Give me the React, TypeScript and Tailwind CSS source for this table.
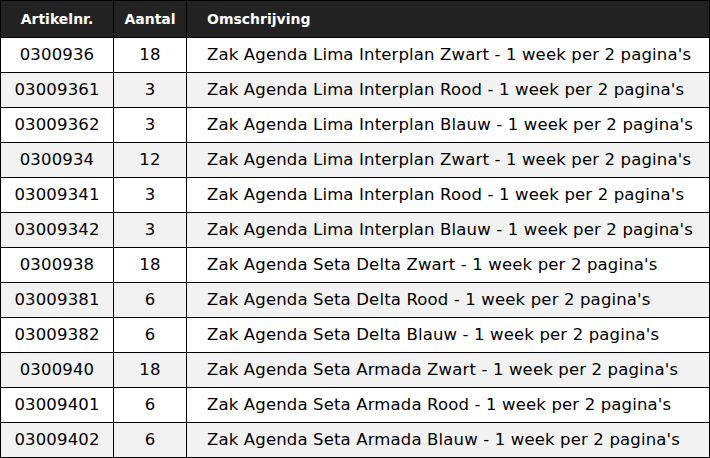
const rows: [string, string, string][] = [
  ['0300936', '18', "Zak Agenda Lima Interplan Zwart - 1 week per 2 pagina's"],
  ['03009361', '3', "Zak Agenda Lima Interplan Rood - 1 week per 2 pagina's"],
  ['03009362', '3', "Zak Agenda Lima Interplan Blauw - 1 week per 2 pagina's"],
  ['0300934', '12', "Zak Agenda Lima Interplan Zwart - 1 week per 2 pagina's"],
  ['03009341', '3', "Zak Agenda Lima Interplan Rood - 1 week per 2 pagina's"],
  ['03009342', '3', "Zak Agenda Lima Interplan Blauw - 1 week per 2 pagina's"],
  ['0300938', '18', "Zak Agenda Seta Delta Zwart - 1 week per 2 pagina's"],
  ['03009381', '6', "Zak Agenda Seta Delta Rood - 1 week per 2 pagina's"],
  ['03009382', '6', "Zak Agenda Seta Delta Blauw - 1 week per 2 pagina's"],
  ['0300940', '18', "Zak Agenda Seta Armada Zwart - 1 week per 2 pagina's"],
  ['03009401', '6', "Zak Agenda Seta Armada Rood - 1 week per 2 pagina's"],
  ['03009402', '6', "Zak Agenda Seta Armada Blauw - 1 week per 2 pagina's"],
];

export default function App() {
  return (
    <div className="w-[710px] bg-white font-['DejaVu_Sans',sans-serif] text-black">
      <table className="w-full border-collapse border border-black">
        <thead>
          <tr className="h-[37px] bg-[#222222] text-[14px] font-bold text-white">
            <th className="w-[113px] border border-black text-center">Artikelnr.</th>
            <th className="w-[73px] border border-black text-center">Aantal</th>
            <th className="border border-black pl-5 text-left">Omschrijving</th>
          </tr>
        </thead>
        <tbody className="text-[16.5px] tracking-[0.15px]">
          {rows.map(([nr, qty, desc], i) => (
            <tr key={nr} className={`h-[35px] ${i % 2 === 1 ? 'bg-[#f2f2f2]' : 'bg-white'}`}>
              <td className="border border-black text-center">{nr}</td>
              <td className="border border-black text-center">{qty}</td>
              <td className="border border-black pl-5 text-left">{desc}</td>
            </tr>
          ))}
        </tbody>
      </table>
    </div>
  );
}
